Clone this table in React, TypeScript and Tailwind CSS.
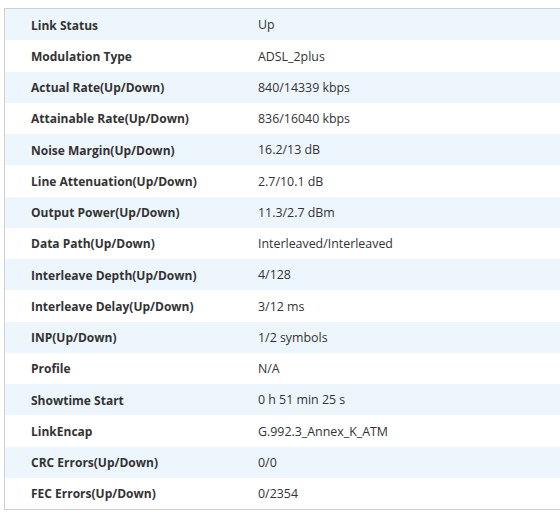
import React from "react";

type Row = {
  label: string;
  value: string;
};

const rows: Row[] = [
  { label: "Link Status", value: "Up" },
  { label: "Modulation Type", value: "ADSL_2plus" },
  { label: "Actual Rate(Up/Down)", value: "840/14339 kbps" },
  { label: "Attainable Rate(Up/Down)", value: "836/16040 kbps" },
  { label: "Noise Margin(Up/Down)", value: "16.2/13 dB" },
  { label: "Line Attenuation(Up/Down)", value: "2.7/10.1 dB" },
  { label: "Output Power(Up/Down)", value: "11.3/2.7 dBm" },
  { label: "Data Path(Up/Down)", value: "Interleaved/Interleaved" },
  { label: "Interleave Depth(Up/Down)", value: "4/128" },
  { label: "Interleave Delay(Up/Down)", value: "3/12 ms" },
  { label: "INP(Up/Down)", value: "1/2 symbols" },
  { label: "Profile", value: "N/A" },
  { label: "Showtime Start", value: "0 h 51 min 25 s" },
  { label: "LinkEncap", value: "G.992.3_Annex_K_ATM" },
  { label: "CRC Errors(Up/Down)", value: "0/0" },
  { label: "FEC Errors(Up/Down)", value: "0/2354" },
];

const App: React.FC = () => {
  return (
    <div className="w-[560px] h-[520px] bg-white pt-[8px] pl-[4px] overflow-hidden font-['Open_Sans',sans-serif] text-[#333]">
      <div className="w-[600px] border border-[#cfcfcf]">
        {rows.map((row, i) => (
          <div
            key={row.label}
            className={
              "flex items-center h-[31.25px] pt-[2px] " +
              (i % 2 === 0 ? "bg-[#eef6fd]" : "bg-white")
            }
          >
            <div className="w-[253px] shrink-0 pl-[26px] text-[12px] font-bold">
              {row.label}
            </div>
            <div className="text-[12.4px]">{row.value}</div>
          </div>
        ))}
      </div>
    </div>
  );
};

export default App;
